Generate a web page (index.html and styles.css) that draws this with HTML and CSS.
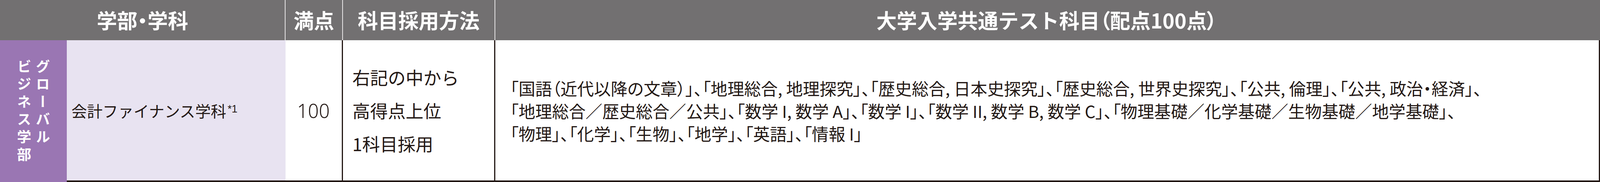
FILE: index.html
```html
<!DOCTYPE html>
<html lang="ja">
<head>
<meta charset="utf-8">
<title>大学入学共通テスト科目</title>
<link rel="stylesheet" href="styles.css">
</head>
<body>
<div class="table">
  <div class="hcell hcell-dept">学部・学科</div>
  <div class="hcell hcell-score">満点</div>
  <div class="hcell hcell-method">科目採用方法</div>
  <div class="hcell hcell-subjects">大学入学共通テスト科目<span class="tight">（配点100点）</span></div>

  <div class="cell faculty"><span class="faculty-text">グローバル<br>ビジネス学部</span></div>
  <div class="cell dept"><span class="dept-name">会計ファイナンス学科<span class="note">*1</span></span></div>
  <div class="cell score">100</div>
  <div class="cell method"><span>右記の中から<br>高得点上位<br>1科目採用</span></div>
  <div class="cell subjects"><span>「国語（近代以降の文章）」、「地理総合, 地理探究」、「歴史総合, 日本史探究」、「歴史総合, 世界史探究」、「公共, 倫理」、「公共, 政治・経済」、<br>「地理総合／歴史総合／公共」、「数学 I, 数学 A」、「数学 I」、「数学 II, 数学 B, 数学 C」、「物理基礎／化学基礎／生物基礎／地学基礎」、<br>「物理」、「化学」、「生物」、「地学」、「英語」、「情報 I」</span></div>
</div>
</body>
</html>
```
FILE: styles.css
```css
* { box-sizing: border-box; }

:root {
  --u: calc(100vw / 5040);
  --v: calc(100vh / 466);
}

html, body {
  margin: 0;
  padding: 0;
  background: #ffffff;
  overflow: hidden;
}

body {
  width: 100vw;
  height: 100vh;
  font-family: "Noto Sans CJK JP", "Noto Sans", sans-serif;
  color: #231815;
}

.table {
  display: grid;
  width: 100%;
  height: 100%;
  grid-template-columns:
    calc(210 * var(--u))
    calc(690 * var(--u))
    calc(180 * var(--u))
    calc(480 * var(--u))
    1fr;
  grid-template-rows: calc(103 * var(--v)) 1fr;
  overflow: hidden;
}

/* ---------- header ---------- */
.hcell {
  background: #727071;
  color: #ffffff;
  font-weight: 700;
  font-size: calc(64 * var(--u));
  line-height: 1;
  display: flex;
  align-items: center;
  justify-content: center;
  white-space: nowrap;
}

.hcell-dept {
  grid-column: 1 / span 2;
  border-right: 2px solid #e6e4e5;
  font-feature-settings: "palt";
}

.hcell-score,
.hcell-method {
  border-right: 2px solid #e6e4e5;
}

.hcell-subjects {
  padding-right: calc(6 * var(--u));
}

.tight {
  font-feature-settings: "palt";
}

/* ---------- body ---------- */
.cell {
  display: flex;
  align-items: center;
  border-bottom: 4px solid #231815;
  min-width: 0;
  overflow: hidden;
}

.faculty {
  background: #9a76b3;
  border-bottom: none;
  justify-content: center;
  padding-top: calc(4 * var(--v));
}

.faculty-text {
  writing-mode: vertical-rl;
  color: #ffffff;
  font-weight: 700;
  font-size: calc(45 * var(--u));
  line-height: calc(59 * var(--u));
  letter-spacing: calc(45 * var(--v) - 45 * var(--u));
  white-space: nowrap;
}

.dept {
  background: #e8e3f1;
  padding-left: calc(15 * var(--u));
  font-size: calc(49 * var(--u));
  line-height: 1;
}

.dept-name {
  white-space: nowrap;
}

.note {
  font-family: "Liberation Sans", "Noto Sans", sans-serif;
  font-size: calc(33 * var(--u));
  margin-left: calc(4 * var(--u));
  vertical-align: calc(14 * var(--u));
}

.score {
  justify-content: center;
  font-family: "Noto Sans", "Liberation Sans", sans-serif;
  font-size: calc(60 * var(--u));
  font-weight: 300;
  color: #231815;
  border-right: 3px solid #231815;
  padding-right: calc(2 * var(--u));
}

.method {
  border-right: 3px solid #231815;
  padding-left: calc(30 * var(--u));
  font-size: calc(56 * var(--u));
  line-height: calc(85 * var(--v));
  white-space: nowrap;
}

.subjects {
  border-right: 3px solid #231815;
  padding-left: calc(47 * var(--u));
  font-size: calc(52.8 * var(--u));
  line-height: calc(58 * var(--v));
  font-feature-settings: "palt";
  white-space: nowrap;
}
```
